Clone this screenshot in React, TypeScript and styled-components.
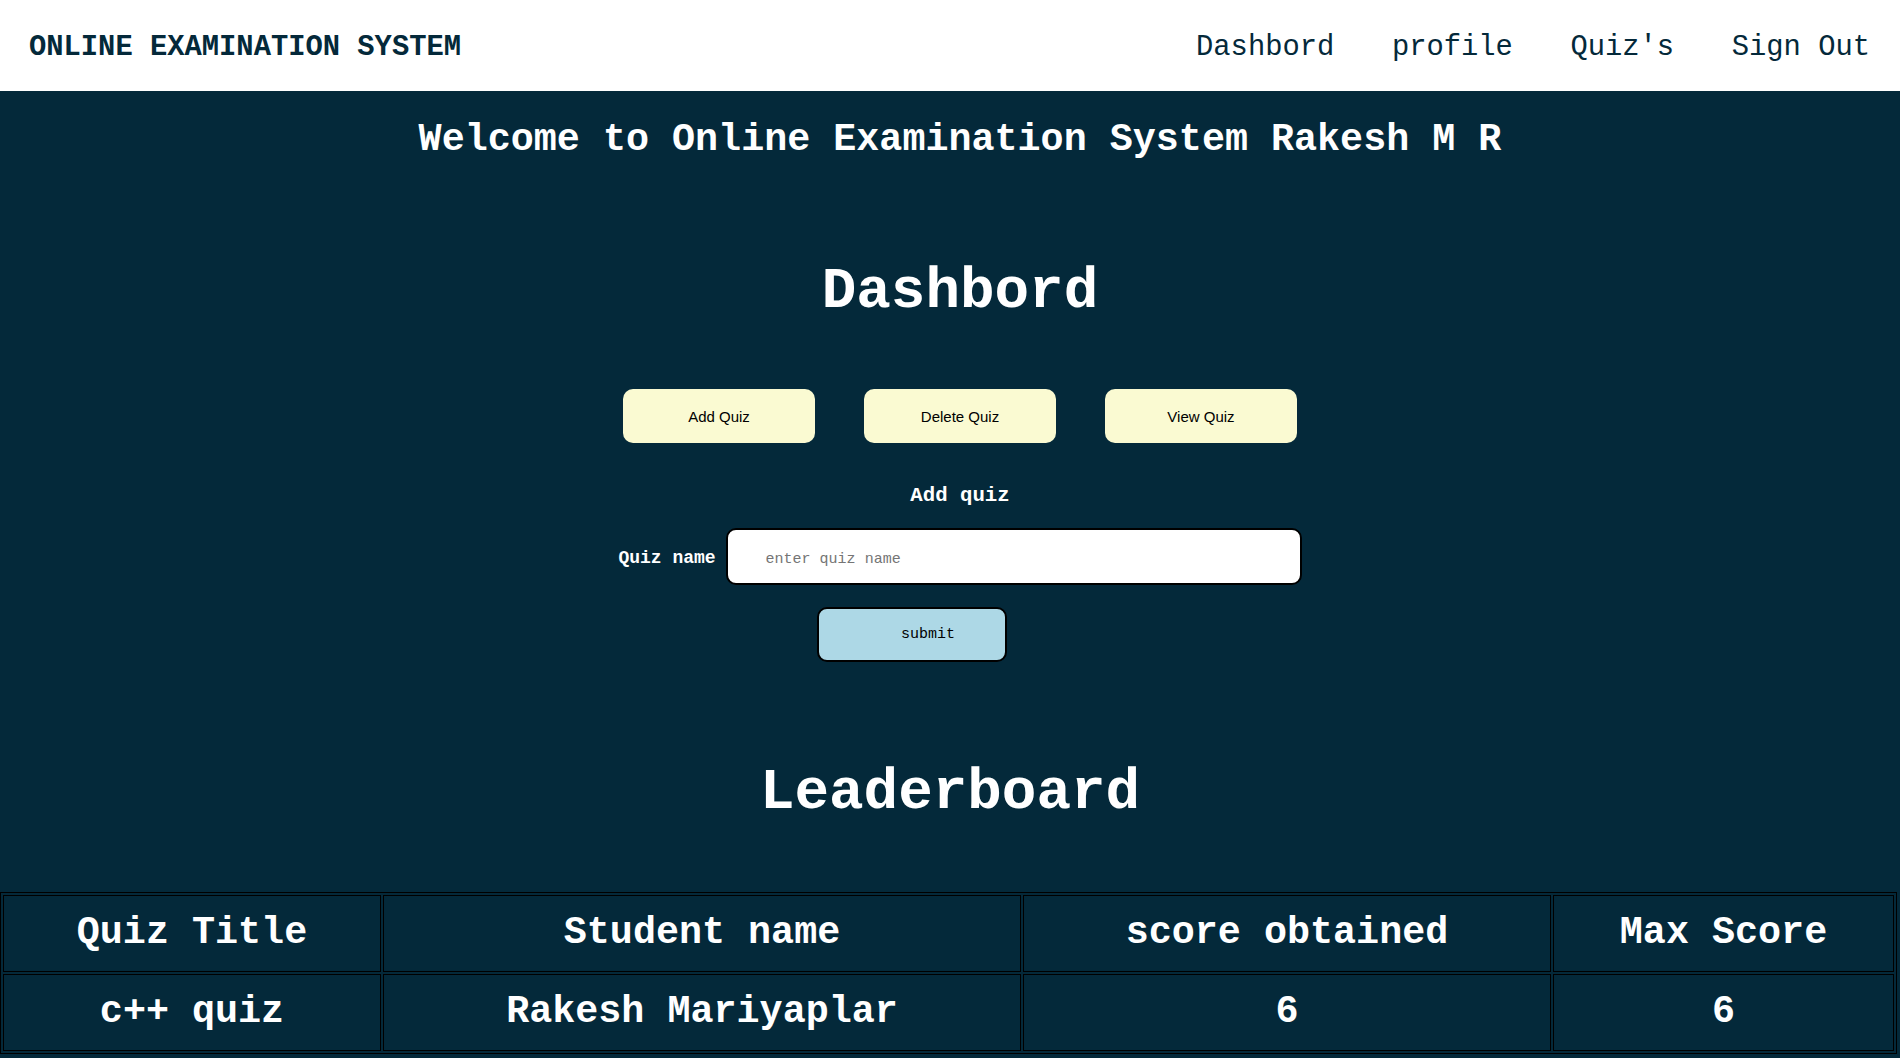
import React from 'react'
import styled, { createGlobalStyle } from 'styled-components'

const ink = '#04293a'
const mono = '"Liberation Mono", "Courier New", monospace'

const GlobalStyle = createGlobalStyle`
  html, body {
    margin: 0;
    padding: 0;
    background: ${ink};
    overflow: hidden;
  }
  * {
    box-sizing: border-box;
  }
`

const NavBar = styled.header`
  height: 91px;
  background: #ffffff;
  display: flex;
  align-items: center;
  justify-content: space-between;
  padding: 4px 30px 0 29px;
  font-family: ${mono};
  color: ${ink};
`

const Brand = styled.div`
  font-size: 28.8px;
  font-weight: bold;
`

const NavLinks = styled.nav`
  display: flex;
  gap: 57.6px;
`

const NavLink = styled.a`
  font-size: 28.8px;
  color: ${ink};
  text-decoration: none;
  cursor: pointer;
`

const Main = styled.main`
  font-family: ${mono};
  color: #ffffff;
`

const DashSection = styled.section`
  display: flex;
  flex-direction: column;
  align-items: center;
  padding: 26px 0 0 20px;
`

const Welcome = styled.h2`
  margin: 0;
  font-size: 38.4px;
  line-height: 46px;
  font-weight: bold;
`

const Heading = styled.h1<{ top: number }>`
  margin: ${({ top }) => top}px 0 0;
  font-size: 57.6px;
  line-height: 66px;
  font-weight: bold;
  text-align: center;
`

const ActionRow = styled.div`
  display: flex;
  gap: 49px;
  margin-top: 64px;
`

const ActionButton = styled.button`
  width: 192px;
  height: 54px;
  border: none;
  border-radius: 10px;
  background: #fafad2;
  color: #000000;
  font-family: "Liberation Sans", Arial, sans-serif;
  font-size: 15px;
  cursor: pointer;
`

const FormTitle = styled.h4`
  margin: 41px 0 0;
  font-size: 20.7px;
  line-height: 24px;
  font-weight: bold;
`

const FieldRow = styled.div`
  display: flex;
  align-items: center;
  gap: 10px;
  margin-top: 20px;
`

const FieldLabel = styled.label`
  font-size: 18px;
  font-weight: bold;
  padding-top: 2px;
`

const TextInput = styled.input`
  width: 576px;
  height: 57px;
  border: 2px solid #000000;
  border-radius: 10px;
  background: #ffffff;
  padding: 6px 0 0 38px;
  font-family: ${mono};
  font-size: 15px;
  color: #000000;
  outline: none;
  &::placeholder {
    color: #757575;
  }
`

const SubmitButton = styled.button`
  width: 190px;
  height: 55px;
  margin: 22px 96px 0 0;
  border: 2px solid #000000;
  border-radius: 10px;
  background: #add8e6;
  color: #000000;
  padding: 0 0 0 32px;
  font-family: ${mono};
  font-size: 15px;
  cursor: pointer;
`

const BoardSection = styled.section`
  display: flex;
  flex-direction: column;
  align-items: center;
`

const Board = styled.table`
  width: 1897px;
  margin-top: 66.4px;
  table-layout: fixed;
  border: 1px solid #000000;
  border-spacing: 2px;
  align-self: flex-start;
`

const Cell = styled.td<{ w: number }>`
  width: ${({ w }) => w}px;
  height: 77px;
  padding: 0;
  border: 1px solid #000000;
  text-align: center;
  vertical-align: middle;
  font-size: 38.4px;
  line-height: 75px;
  font-weight: bold;
  color: #ffffff;
  white-space: nowrap;
`

const columns = [
  { title: 'Quiz Title', w: 378 },
  { title: 'Student name', w: 638 },
  { title: 'score obtained', w: 528 },
  { title: 'Max Score', w: 341 },
]

const rows = [['c++ quiz', 'Rakesh Mariyaplar', '6', '6']]

export default function App() {
  return (
    <>
      <GlobalStyle />
      <NavBar>
        <Brand>ONLINE EXAMINATION SYSTEM</Brand>
        <NavLinks>
          <NavLink>Dashbord</NavLink>
          <NavLink>profile</NavLink>
          <NavLink>Quiz's</NavLink>
          <NavLink>Sign Out</NavLink>
        </NavLinks>
      </NavBar>
      <Main>
        <DashSection>
          <Welcome>Welcome to Online Examination System Rakesh M R</Welcome>
          <Heading top={96}>Dashbord</Heading>
          <ActionRow>
            <ActionButton>Add Quiz</ActionButton>
            <ActionButton>Delete Quiz</ActionButton>
            <ActionButton>View Quiz</ActionButton>
          </ActionRow>
          <FormTitle>Add quiz</FormTitle>
          <FieldRow>
            <FieldLabel htmlFor="quizName">Quiz name</FieldLabel>
            <TextInput id="quizName" placeholder="enter quiz name" />
          </FieldRow>
          <SubmitButton>submit</SubmitButton>
        </DashSection>
        <BoardSection>
          <Heading top={97.6}>Leaderboard</Heading>
          <Board>
            <thead>
              <tr>
                {columns.map((c) => (
                  <Cell as="th" key={c.title} w={c.w}>
                    {c.title}
                  </Cell>
                ))}
              </tr>
            </thead>
            <tbody>
              {rows.map((r, i) => (
                <tr key={i}>
                  {r.map((v, j) => (
                    <Cell key={j} w={columns[j].w}>
                      {v}
                    </Cell>
                  ))}
                </tr>
              ))}
            </tbody>
          </Board>
        </BoardSection>
      </Main>
    </>
  )
}
